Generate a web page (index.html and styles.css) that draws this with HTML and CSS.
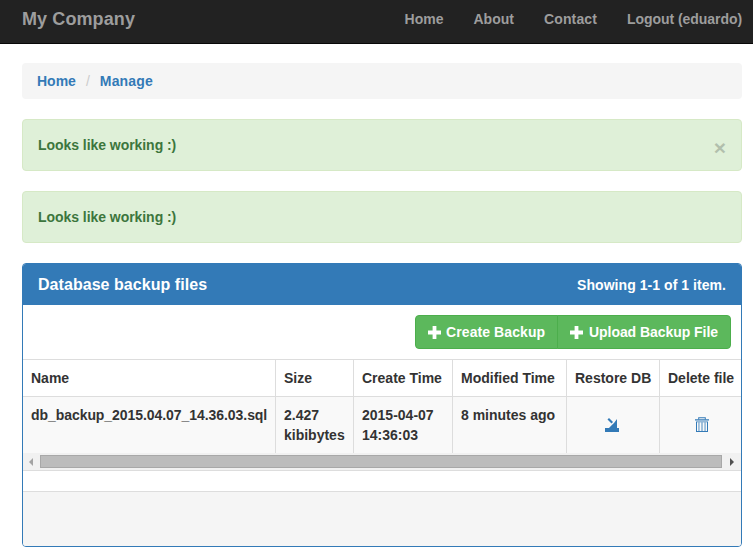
FILE: index.html
```html
<!DOCTYPE html>
<html lang="en">
<head>
    <meta charset="UTF-8">
    <meta name="viewport" content="width=device-width, initial-scale=1.0">
    <title>Manage</title>
    <link rel="stylesheet" href="styles.css">
</head>
<body>

    <!-- top navbar -->
    <header class="navbar">
        <a href="#" class="brand">My Company</a>
        <nav class="nav-links">
            <a href="#">Home</a>
            <a href="#">About</a>
            <a href="#" class="nav-contact">Contact</a>
            <a href="#" class="nav-logout">Logout (eduardo)</a>
        </nav>
    </header>

    <main class="page">
        <div class="breadcrumb">
            <a href="#">Home</a>
            <span class="crumb-sep">/</span>
            <a href="#" class="crumb-active">Manage</a>
        </div>

        <div class="alert">
            <span>Looks like working :)</span>
            <span class="alert-close">×</span>
        </div>
        <div class="alert">
            <span>Looks like working :)</span>
        </div>

        <section class="panel">
            <div class="panel-heading">
                <h3>Database backup files</h3>
                <span class="summary">Showing 1-1 of 1 item.</span>
            </div>

            <div class="toolbar">
                <div class="btn-group">
                    <a href="#" class="btn btn-create">
                        <svg class="plus" viewBox="0 0 13 13"><path d="M4.6 0h3.8v4.6H13v3.8H8.4V13H4.6V8.4H0V4.6h4.6z"/></svg>
                        Create Backup
                    </a>
                    <a href="#" class="btn btn-upload">
                        <svg class="plus" viewBox="0 0 13 13"><path d="M4.6 0h3.8v4.6H13v3.8H8.4V13H4.6V8.4H0V4.6h4.6z"/></svg>
                        Upload Backup File
                    </a>
                </div>
            </div>

            <table class="grid">
                <colgroup>
                    <col class="col-name">
                    <col class="col-size">
                    <col class="col-create">
                    <col class="col-modified">
                    <col class="col-restore">
                    <col class="col-delete">
                </colgroup>
                <thead>
                    <tr>
                        <th>Name</th>
                        <th>Size</th>
                        <th>Create Time</th>
                        <th>Modified Time</th>
                        <th>Restore DB</th>
                        <th>Delete file</th>
                    </tr>
                </thead>
                <tbody>
                    <tr>
                        <td class="cell-file">db_backup_2015.04.07_14.36.03.sql</td>
                        <td>2.427 kibibytes</td>
                        <td>2015-04-07 14:36:03</td>
                        <td>8 minutes ago</td>
                        <td class="cell-icon cell-restore">
                            <svg class="icon" viewBox="0 0 14 15">
                                <path d="M0 11h14v4H0z"/>
                                <path d="M12 2v9H4l2.4-2.4L9 6z"/>
                                <path d="M4 1 2.5 2.5l4 4L8 5z"/>
                            </svg>
                        </td>
                        <td class="cell-icon cell-delete">
                            <svg class="icon" viewBox="0 0 14 15">
                                <path d="M0 2.3h14v1.2H0z"/>
                                <path d="M3.2 2.4V.2h7.6v2.2H9.8V1.2H4.2v1.2z"/>
                                <path d="M1 4.4h12V15H1zM2 5.3v8.8h10V5.3z" fill-rule="evenodd"/>
                                <path d="M3.4 5.3h1.1v8.8H3.4zM6.4 5.3h1.2v8.8H6.4zM9.5 5.3h1.1v8.8H9.5z" opacity="0.75"/>
                            </svg>
                        </td>
                    </tr>
                </tbody>
            </table>

            <!-- horizontal scrollbar of the grid -->
            <div class="scrollbar">
                <span class="arrow arrow-left"></span>
                <div class="thumb"></div>
                <span class="arrow arrow-right"></span>
            </div>

            <div class="panel-blank"></div>
            <div class="panel-footer"></div>
        </section>
    </main>

</body>
</html>
```

FILE: styles.css
```css
/* general */
body {
    margin: 0;
    font-family: "Liberation Sans", Arial, sans-serif;
    font-size: 14px;
    font-weight: bold;
    line-height: 20px;
    color: #333;
    background-color: #fff;
}

a {
    text-decoration: none;
}

/* top navbar */
.navbar {
    display: flex;
    justify-content: space-between;
    align-items: center;
    height: 44px;
    box-sizing: border-box;
    padding: 0 11px 6px 22px;
    background-color: #222;
    border-bottom: 1px solid #080808;
}

.brand {
    font-size: 18px;
    letter-spacing: 0.1px;
    color: #9d9d9d;
}

.nav-links {
    display: flex;
    gap: 30px;
}

.nav-links a {
    color: #9d9d9d;
}

.nav-links .nav-contact {
    letter-spacing: 0.15px;
}

.nav-links .nav-logout {
    letter-spacing: -0.06px;
}

/* page column */
.page {
    padding: 19px 11px 0 22px;
}

.breadcrumb {
    display: flex;
    gap: 10px;
    height: 36px;
    align-items: center;
    padding: 0 15px;
    background-color: #f5f5f5;
    border-radius: 4px;
}

.breadcrumb a {
    color: #337ab7;
}

.breadcrumb .crumb-active {
    letter-spacing: 0.17px;
}

.crumb-sep {
    font-weight: normal;
    color: #ccc;
}

.alert {
    position: relative;
    margin-top: 20px;
    padding: 15px;
    box-sizing: border-box;
    height: 52px;
    letter-spacing: -0.05px;
    color: #3c763d;
    background-color: #dff0d8;
    border: 1px solid #d6e9c6;
    border-radius: 4px;
}

.alert-close {
    position: absolute;
    top: 17px;
    right: 15px;
    font-size: 21px;
    line-height: 21px;
    color: #000;
    opacity: 0.2;
}

/* panel */
.panel {
    margin-top: 20px;
    height: 284px;
    box-sizing: border-box;
    border: 1px solid #337ab7;
    border-radius: 4px;
    overflow: hidden;
    background-color: #fff;
}

.panel-heading {
    display: flex;
    justify-content: space-between;
    align-items: center;
    height: 41px;
    padding: 0 15px;
    color: #fff;
    background-color: #337ab7;
}

.panel-heading h3 {
    margin: 0;
    font-size: 16px;
    letter-spacing: 0.05px;
}

.summary {
    letter-spacing: 0.05px;
}

.toolbar {
    display: flex;
    justify-content: flex-end;
    height: 54px;
    padding: 10px 10px 0 0;
    box-sizing: border-box;
}

.btn-group {
    display: flex;
    height: 34px;
}

.btn {
    display: flex;
    align-items: center;
    gap: 5px;
    padding: 0 12px;
    color: #fff;
    background-color: #5cb85c;
    border: 1px solid #4cae4c;
    border-radius: 0 4px 4px 0;
    margin-left: -1px;
}

.btn-create {
    border-radius: 4px 0 0 4px;
    margin-left: 0;
    letter-spacing: 0.08px;
}

.btn-upload {
    gap: 5.8px;
    letter-spacing: -0.05px;
}

.plus {
    width: 13px;
    height: 13px;
    fill: #fff;
}

/* grid */
.grid {
    width: 719px;
    table-layout: fixed;
    border-collapse: collapse;
    border-top: 1px solid #ddd;
}

.col-name { width: 252px; }
.col-size { width: 78px; }
.col-create { width: 99px; }
.col-modified { width: 114px; }
.col-restore { width: 93px; }
.col-delete { width: 83px; }

.grid th,
.grid td {
    padding: 8px 8px 8px 8.5px;
    text-align: left;
    vertical-align: top;
    border-left: 1px solid #ddd;
}

.grid th:first-child,
.grid td:first-child {
    padding-left: 8px;
    border-left: none;
}

.grid th {
    height: 20px;
    border-bottom: 1px solid #ddd;
    white-space: nowrap;
}

.grid td {
    height: 40px;
    background-color: #f9f9f9;
}

.grid .cell-file {
    letter-spacing: -0.06px;
}

.grid td.cell-icon {
    height: 37px;
    vertical-align: middle;
    padding-top: 9px;
    padding-bottom: 10px;
}

.grid td.cell-restore {
    padding-right: 10px;
}

.grid td.cell-delete {
    padding-left: 10px;
}

.icon {
    display: block;
    margin: 0 auto;
    width: 14px;
    height: 15px;
    fill: #337ab7;
}

/* fake scrollbar */
.scrollbar {
    display: flex;
    align-items: flex-start;
    height: 18px;
    padding: 2px 7px 0 6px;
    box-sizing: border-box;
    background-color: #f1f1f1;
    border-bottom: 1px solid #ddd;
}

.thumb {
    flex: 1;
    height: 13px;
    margin: 0 8px 0 7px;
    box-sizing: border-box;
    background-color: #bcbcbc;
    border: 1px solid #a8a8a8;
}

.arrow {
    width: 0;
    height: 0;
    margin-top: 3px;
    border-top: 4px solid transparent;
    border-bottom: 4px solid transparent;
}

.arrow-left {
    border-right: 4px solid #a3a3a3;
}

.arrow-right {
    border-left: 4px solid #505050;
}

.panel-blank {
    height: 20px;
}

.panel-footer {
    height: 55px;
    background-color: #f5f5f5;
    border-top: 1px solid #ddd;
}
```
